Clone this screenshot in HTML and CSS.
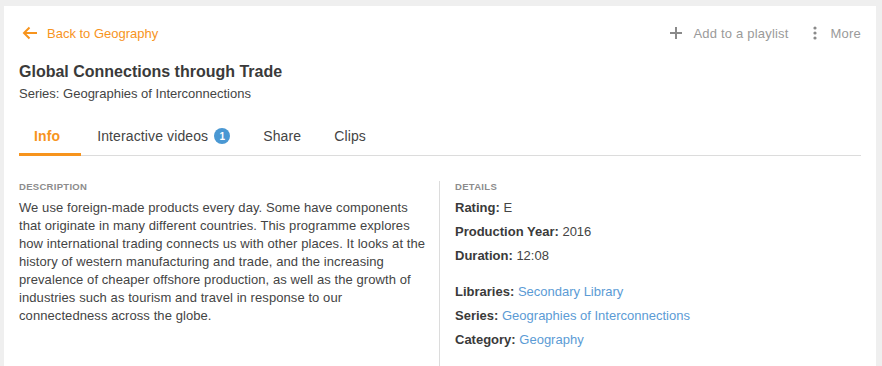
FILE: index.html
```html
<!DOCTYPE html>
<html>
<head>
<meta charset="utf-8">
<link rel="stylesheet" href="styles.css">
</head>
<body>
<div class="card">
  <div class="topbar">
    <a class="back" href="#">
      <svg class="back-icon" width="16" height="14" viewBox="0 0 16 14"><path d="M15 7H2M7.5 1.5L2 7l5.5 5.5" fill="none" stroke="currentColor" stroke-width="2"/></svg>
      <span>Back to Geography</span>
    </a>
    <div class="actions">
      <a class="action" href="#">
        <svg width="12" height="12" viewBox="0 0 12 12"><path d="M6 0v12M0 6h12" stroke="#8a8a8a" stroke-width="2"/></svg>
        <span>Add to a playlist</span>
      </a>
      <a class="action more" href="#">
        <svg width="4" height="14" viewBox="0 0 4 14"><circle cx="2" cy="2" r="1.6" fill="#8a8a8a"/><circle cx="2" cy="7" r="1.6" fill="#8a8a8a"/><circle cx="2" cy="12" r="1.6" fill="#8a8a8a"/></svg>
        <span>More</span>
      </a>
    </div>
  </div>
  <h1 class="title">Global Connections through Trade</h1>
  <div class="series">Series: Geographies of Interconnections</div>
  <div class="tabs">
    <div class="tab active">Info</div>
    <div class="tab">Interactive videos <span class="badge">1</span></div>
    <div class="tab">Share</div>
    <div class="tab">Clips</div>
  </div>
  <div class="content">
    <div class="col desc">
      <div class="label">Description</div>
      <p class="text">We use foreign-made products every day. Some have components that originate in many different countries. This programme explores how international trading connects us with other places. It looks at the history of western manufacturing and trade, and the increasing prevalence of cheaper offshore production, as well as the growth of industries such as tourism and travel in response to our connectedness across the globe.</p>
    </div>
    <div class="col details">
      <div class="label">Details</div>
      <div class="group">
        <div class="row"><b>Rating:</b> E</div>
        <div class="row"><b>Production Year:</b> 2016</div>
        <div class="row"><b>Duration:</b> 12:08</div>
      </div>
      <div class="group">
        <div class="row"><b>Libraries:</b> <a href="#">Secondary Library</a></div>
        <div class="row"><b>Series:</b> <a href="#">Geographies of Interconnections</a></div>
        <div class="row"><b>Category:</b> <a href="#">Geography</a></div>
      </div>
    </div>
  </div>
</div>
</body>
</html>
```

FILE: styles.css
```css
html, body {
  margin: 0;
  padding: 0;
}
body {
  background: #efefef;
  padding: 6px 6px 0 4px;
  font-family: "Liberation Sans", Arial, sans-serif;
  color: #444;
  height: 366px;
  box-sizing: border-box;
  overflow: hidden;
}
a { text-decoration: none; }
.card {
  background: #fff;
  padding: 18px 15px 0 15px;
  height: 360px;
  box-sizing: border-box;
}
.topbar {
  display: flex;
  justify-content: space-between;
  align-items: center;
  height: 18px;
}
.back {
  display: flex;
  align-items: center;
  color: #f7941d;
  font-size: 13px;
}
.back-icon {
  margin-left: 3px;
  margin-right: 9px;
}
.actions {
  display: flex;
  align-items: center;
}
.action {
  display: flex;
  align-items: center;
  color: #9a9a9a;
  font-size: 13px;
  letter-spacing: 0.2px;
}
.action svg { margin-right: 11px; }
.more { margin-left: 24px; }
.more svg { margin-right: 14px; }
.title {
  margin: 20px 0 0 0;
  font-size: 16px;
  line-height: 20px;
  font-weight: bold;
  color: #3a3a3a;
}
.series {
  margin-top: 4px;
  font-size: 13px;
  line-height: 16px;
  color: #444;
}
.tabs {
  display: flex;
  margin-top: 17px;
  border-bottom: 1px solid #dcdcdc;
}
.tab {
  display: flex;
  align-items: center;
  height: 34px;
  padding: 0 17px 0 16px;
  font-size: 14px;
  letter-spacing: 0.12px;
  color: #444;
  margin-bottom: -1px;
  border-bottom: 3px solid transparent;
}
.tab.active {
  color: #f7941d;
  font-weight: bold;
  padding: 0 21px 0 15px;
  border-bottom-color: #f7941d;
}
.badge {
  display: inline-flex;
  align-items: center;
  justify-content: center;
  width: 16px;
  height: 16px;
  margin-left: 6px;
  border-radius: 50%;
  background: #4a98d3;
  color: #fff;
  font-size: 10px;
  font-weight: bold;
  letter-spacing: 0;
}
.content {
  display: grid;
  grid-template-columns: 420px 1fr;
  margin-top: 25px;
}
.col { min-height: 200px; }
.desc { padding-right: 12px; }
.details {
  border-left: 1px solid #dcdcdc;
  padding-left: 15px;
}
.label {
  font-size: 9.5px;
  line-height: 12px;
  font-weight: bold;
  color: #8c8c8c;
  text-transform: uppercase;
  letter-spacing: 0.3px;
}
.text {
  margin: 6px 0 0 0;
  font-size: 13px;
  line-height: 18px;
  letter-spacing: 0.08px;
  color: #444;
}
.group {
  margin-top: 3px;
}
.group + .group { margin-top: 12px; }
.row {
  font-size: 13px;
  line-height: 24px;
  color: #444;
}
.row b { color: #3a3a3a; }
.row a { color: #5b9bd5; }
```
